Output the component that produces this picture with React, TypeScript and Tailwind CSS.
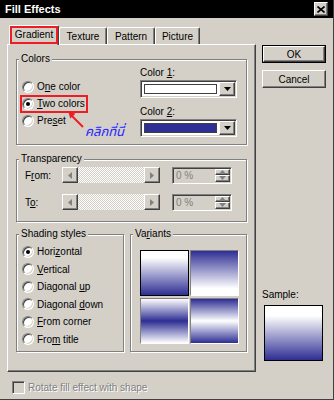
import React from "react";

// classic 3D borders
const raised =
  "border border-t-white border-l-white border-r-[#404040] border-b-[#404040] shadow-[inset_-1px_-1px_0_#808080]";
const sunken =
  "border border-t-[#808080] border-l-[#808080] border-r-white border-b-white shadow-[inset_1px_1px_0_#404040,inset_-1px_-1px_0_#d4d0c8]";
const etched = "border border-[#808080] shadow-[inset_1px_1px_0_#fff,1px_1px_0_#fff]";

type Dir = "down" | "up" | "left" | "right";

function Tri({ dir, color = "#000" }: { dir: Dir; color?: string }) {
  const horiz = dir === "down" || dir === "up";
  const pts = {
    down: "0,0 7,0 3.5,4",
    up: "0,4 7,4 3.5,0",
    left: "4,0 4,7 0,3.5",
    right: "0,0 0,7 4,3.5",
  }[dir];
  return (
    <svg width={horiz ? 7 : 4} height={horiz ? 4 : 7} viewBox={`0 0 ${horiz ? 7 : 4} ${horiz ? 4 : 7}`}>
      <polygon points={pts} fill={color} />
    </svg>
  );
}

function Radio({ checked }: { checked?: boolean }) {
  return (
    <span
      className={`w-[12px] h-[12px] shrink-0 rounded-full bg-white flex items-center justify-center ${sunken}`}
    >
      {checked && <span className="w-[4px] h-[4px] rounded-full bg-black" />}
    </span>
  );
}

function RadioRow({ checked, children, h = "h-[17px]" }: { checked?: boolean; children: React.ReactNode; h?: string }) {
  return (
    <div className={`flex items-center gap-[3px] ${h}`}>
      <Radio checked={checked} />
      <span>{children}</span>
    </div>
  );
}

function Group({ label, className, children }: { label: React.ReactNode; className?: string; children: React.ReactNode }) {
  return (
    <fieldset className={`relative ${etched} ${className ?? ""}`}>
      <legend className="ml-[2px] px-[2px] leading-[12px] bg-[#d4d0c8]">{label}</legend>
      {children}
    </fieldset>
  );
}

function ColorDrop({ fill }: { fill: string }) {
  return (
    <div className={`w-[97px] h-[18px] flex bg-white ${sunken} p-[1px]`}>
      <div className="flex-1 p-[2px]">
        <div className="w-full h-full border border-[#404040]" style={{ background: fill }} />
      </div>
      <div className={`w-[16px] bg-[#d4d0c8] flex items-center justify-center ${raised}`}>
        <Tri dir="down" />
      </div>
    </div>
  );
}

function ScrollBar() {
  return (
    <div className="w-[98px] h-[16px] flex">
      <div className={`w-[16px] bg-[#d4d0c8] flex items-center justify-center ${raised}`}>
        <Tri dir="left" color="#808080" />
      </div>
      <div className="flex-1 bg-[image:repeating-conic-gradient(#fff_0_25%,#d4d0c8_0_50%)] bg-[length:2px_2px]" />
      <div className={`w-[16px] bg-[#d4d0c8] flex items-center justify-center ${raised}`}>
        <Tri dir="right" color="#808080" />
      </div>
    </div>
  );
}

function Spin() {
  return (
    <div className={`w-[60px] h-[17px] flex bg-[#d4d0c8] ${sunken} p-[1px]`}>
      <span className="flex-1 pl-[2px] leading-[13px] text-[#808080]">0 %</span>
      <div className="w-[15px] flex flex-col">
        <div className={`flex-1 flex items-center justify-center ${raised}`}>
          <Tri dir="up" color="#808080" />
        </div>
        <div className={`flex-1 flex items-center justify-center ${raised}`}>
          <Tri dir="down" color="#808080" />
        </div>
      </div>
    </div>
  );
}

const tabs = [
  { name: "Gradient", w: "w-[50px]" },
  { name: "Texture", w: "w-[48px]" },
  { name: "Pattern", w: "w-[48px]" },
  { name: "Picture", w: "w-[45px]" },
];

export default function App() {
  return (
    <div className="w-[334px] h-[400px] bg-[#d4d0c8] border-r border-b border-[#404040] flex flex-col text-[10px] text-black font-['Liberation_Sans',Arial,sans-serif] overflow-hidden">
      {/* title bar */}
      <div className="h-[18px] shrink-0 bg-black flex items-center justify-between pl-[5px] pr-[5px]">
        <span className="text-white font-bold text-[11px]">Fill Effects</span>
        <div className={`w-[14px] h-[14px] bg-[#d4d0c8] flex items-center justify-center ${raised}`}>
          <svg width="8" height="7" viewBox="0 0 8 7">
            <path d="M0.5 0.5 L7.5 6.5 M7.5 0.5 L0.5 6.5" stroke="#000" strokeWidth="1.6" />
          </svg>
        </div>
      </div>

      <div className="flex pl-[7px] pt-[7px]">
        {/* left: tabs + panel */}
        <div className="w-[249px] flex flex-col">
          <div className="h-[19px] flex items-end pl-[2px]">
            {tabs.map((t, i) =>
              i === 0 ? (
                <div
                  key={t.name}
                  className={`relative z-10 -mb-[1px] h-[20px] ${t.w} bg-[#d4d0c8] border-t border-l border-t-white border-l-white border-r border-r-[#404040] rounded-t-[2px] shadow-[inset_-1px_0_0_#808080] flex items-start justify-center pt-[2px]`}
                >
                  <span className="outline-2 outline-[#ee1c25] px-[3px] leading-[13px] h-[14px]">Gradient</span>
                </div>
              ) : (
                <div
                  key={t.name}
                  className={`h-[17px] ${t.w} border-t border-l border-t-white border-l-white border-r border-r-[#404040] rounded-t-[2px] shadow-[inset_-1px_0_0_#808080] flex items-center justify-center`}
                >
                  {t.name}
                </div>
              )
            )}
          </div>

          <div className={`h-[328px] ${raised} pl-[8px] pt-[8px] flex flex-col`}>
            {/* Colors */}
            <Group label="Colors" className="w-[231px]">
              <div className="flex">
                <div className="relative w-[123px] pl-[5px] pt-[13px]">
                  <RadioRow>
                    O<u>n</u>e color
                  </RadioRow>
                  <div className="h-[17px] flex items-center">
                    <span className="flex items-center gap-[3px] h-[14px] outline-2 outline-[#ee1c25]">
                      <Radio checked />
                      <span className="pr-[1px]">
                        <u>T</u>wo colors
                      </span>
                    </span>
                  </div>
                  <RadioRow>
                    Pre<u>s</u>et
                  </RadioRow>
                  {/* annotation */}
                  <svg className="absolute left-[49px] top-[44px]" width="20" height="20" viewBox="0 0 20 20">
                    <path d="M17 18 L6 7" stroke="#ee1c25" strokeWidth="2" />
                    <polygon points="2,2 9.4,4.7 4.3,9.5" fill="#ee1c25" />
                  </svg>
                  <span className="absolute left-[68px] top-[59px] text-[13px] leading-[16px] italic text-[#2424ff] font-['Noto_Sans_Thai','DejaVu_Sans',sans-serif] whitespace-nowrap">
                    คลิกที่นี่
                  </span>
                </div>
                <div className="flex flex-col pt-[1px] pb-[7px]">
                  <span className="leading-[13px]">
                    Color <u>1</u>:
                  </span>
                  <div className="mt-[1px]">
                    <ColorDrop fill="#ffffff" />
                  </div>
                  <span className="leading-[13px] mt-[7px]">
                    Color <u>2</u>:
                  </span>
                  <div className="mt-[1px]">
                    <ColorDrop fill="#2e2e94" />
                  </div>
                </div>
              </div>
            </Group>

            {/* Transparency */}
            <Group label="Transparency" className="w-[231px] mt-[8px]">
              <div className="flex flex-col pl-[8px] pt-[2px] pb-[11px]">
                <div className="flex items-center h-[16px]">
                  <span className="w-[37px]">
                    F<u>r</u>om:
                  </span>
                  <ScrollBar />
                  <div className="ml-[12px]">
                    <Spin />
                  </div>
                </div>
                <div className="flex items-center h-[16px] mt-[11px]">
                  <span className="w-[37px]">
                    T<u>o</u>:
                  </span>
                  <ScrollBar />
                  <div className="ml-[12px]">
                    <Spin />
                  </div>
                </div>
              </div>
            </Group>

            {/* Shading + Variants */}
            <div className="flex mt-[6px] gap-[6px]">
              <Group label="Shading styles" className="w-[108px]">
                <div className="pl-[5px] pt-[3px] pb-[3px]">
                  <RadioRow checked h="h-[17.5px]">
                    Hori<u>z</u>ontal
                  </RadioRow>
                  <RadioRow h="h-[17.5px]">
                    <u>V</u>ertical
                  </RadioRow>
                  <RadioRow h="h-[17.5px]">
                    Diagonal <u>u</u>p
                  </RadioRow>
                  <RadioRow h="h-[17.5px]">
                    Diagonal <u>d</u>own
                  </RadioRow>
                  <RadioRow h="h-[17.5px]">
                    <u>F</u>rom corner
                  </RadioRow>
                  <RadioRow h="h-[17.5px]">
                    Fro<u>m</u> title
                  </RadioRow>
                </div>
              </Group>
              <Group
                label={
                  <>
                    Va<u>r</u>iants
                  </>
                }
                className="w-[117px]"
              >
                <div className="grid grid-cols-[49px_49px] gap-x-[1px] gap-y-[2px] pl-[9px] pt-[10px]">
                  <div className="h-[46px] border border-black bg-[linear-gradient(to_bottom,#fff,#fff_15%,#2e2e94)]" />
                  <div className="h-[46px] border border-t-[#808080] border-l-[#808080] border-r-white border-b-white bg-[linear-gradient(to_bottom,#2e2e94,#fff_85%,#fff)]" />
                  <div className="h-[46px] border border-t-[#808080] border-l-[#808080] border-r-white border-b-white bg-[linear-gradient(to_bottom,#fff,#2e2e94_50%,#fff)]" />
                  <div className="h-[46px] border border-t-[#808080] border-l-[#808080] border-r-white border-b-white bg-[linear-gradient(to_bottom,#2e2e94,#fff_50%,#2e2e94)]" />
                </div>
              </Group>
            </div>
          </div>
        </div>

        {/* right column */}
        <div className="ml-[6px] pt-[20px] flex flex-col">
          <div className="w-[64px] h-[18px] border border-black">
            <div className={`w-full h-full flex items-center justify-center ${raised}`}>OK</div>
          </div>
          <div className={`w-[64px] h-[18px] mt-[7px] flex items-center justify-center ${raised}`}>Cancel</div>
          <span className="mt-[200px] leading-[13px]">Sample:</span>
          <div className="ml-[2px] mt-[4px] w-[59px] h-[56px] border border-black bg-[linear-gradient(to_bottom,#fff,#fff_18%,#2e2e94)]" />
        </div>
      </div>

      {/* checkbox */}
      <div className="flex items-center pl-[12px] mt-[8px] gap-[3px]">
        <span className={`w-[13px] h-[13px] bg-[#d4d0c8] ${sunken}`} />
        <span className="text-[#808080] [text-shadow:1px_1px_0_#fff]">Rotate fill effect with shape</span>
      </div>
    </div>
  );
}
